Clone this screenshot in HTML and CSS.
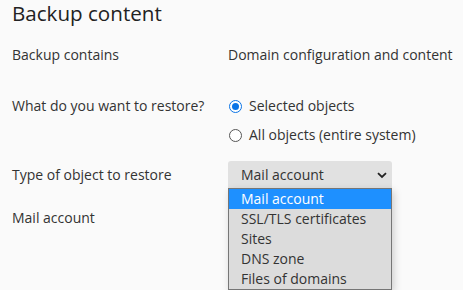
FILE: index.html
```html
<!DOCTYPE html>
<html>
<head>
<meta charset="utf-8">
<link rel="stylesheet" href="styles.css">
</head>
<body>
<div class="page">
  <h1 class="title">Backup content</h1>
  <div class="row row-contains">
    <div class="label">Backup contains</div>
    <div class="value">Domain configuration and content</div>
  </div>
  <div class="row row-restore">
    <div class="label">What do you want to restore?</div>
    <div class="value radios">
      <div class="radio-line"><span class="radio checked"></span>Selected objects</div>
      <div class="radio-line"><span class="radio"></span>All objects (entire system)</div>
    </div>
  </div>
  <div class="row row-type">
    <div class="label">Type of object to restore</div>
    <div class="value">
      <div class="select-wrap">
        <div class="select">
          <span>Mail account</span>
          <svg class="chev" width="10" height="7" viewBox="0 0 10 7"><path d="M1 1.2 L5 5 L9 1.2" fill="none" stroke="#222" stroke-width="1.8"/></svg>
        </div>
        <ul class="options">
          <li class="sel">Mail account</li>
          <li>SSL/TLS certificates</li>
          <li>Sites</li>
          <li>DNS zone</li>
          <li>Files of domains</li>
        </ul>
      </div>
    </div>
  </div>
  <div class="row row-mail">
    <div class="label">Mail account</div>
  </div>
</div>
</body>
</html>
```
FILE: styles.css
```css
html, body {
  margin: 0;
  padding: 0;
  background: #fafafa;
}
body {
  font-family: "Open Sans", "Noto Sans", sans-serif;
  color: #333;
  font-size: 14px;
  overflow: hidden;
  height: 290px;
}
.page {
  padding: 0 12px;
}
.title {
  margin: 0;
  padding-top: 0;
  font-size: 20.6px;
  font-weight: 400;
  line-height: 27px;
  color: #222;
}
.row {
  display: flex;
}
.label {
  width: 216px;
  flex: none;
  line-height: 20px;
}
.value {
  line-height: 20px;
  white-space: nowrap;
  flex: 1;
}
.row-contains {
  margin-top: 18px;
}
.row-restore {
  margin-top: 31px;
}
.radios {
  display: flex;
  flex-direction: column;
  gap: 9px;
}
.radio-line {
  display: flex;
  align-items: center;
}
.radio {
  width: 11px;
  height: 11px;
  border: 1px solid #555;
  border-radius: 50%;
  margin: 0 7px 0 1px;
  background: #fff;
  position: relative;
  box-sizing: content-box;
}
.radio.checked {
  border-color: #0a74e6;
}
.radio.checked::after {
  content: "";
  position: absolute;
  left: 2px;
  top: 2px;
  width: 7px;
  height: 7px;
  border-radius: 50%;
  background: #0a74e6;
}
.row-type {
  margin-top: 16px;
  align-items: center;
}
.select-wrap {
  position: relative;
  width: 164px;
}
.select {
  height: 27px;
  background: #e1e1e1;
  border-radius: 3px 3px 0 0;
  display: flex;
  align-items: center;
  justify-content: space-between;
  padding: 0 5px 0 13px;
  color: #333;
}
.chev {
  margin-top: 1px;
}
.options {
  position: absolute;
  left: 0;
  top: 27px;
  width: 164px;
  margin: 0;
  padding: 0;
  list-style: none;
  background: #dcdcdc;
  border: 1px solid #767676;
  box-sizing: border-box;
  box-shadow: 2px 3px 8px rgba(0,0,0,0.18);
  z-index: 2;
}
.options li {
  height: 20px;
  line-height: 20px;
  padding-left: 12px;
  color: #333;
}
.options li.sel {
  background: #1e90ff;
  color: #fff;
}
.row-mail {
  margin-top: 20px;
}
```
